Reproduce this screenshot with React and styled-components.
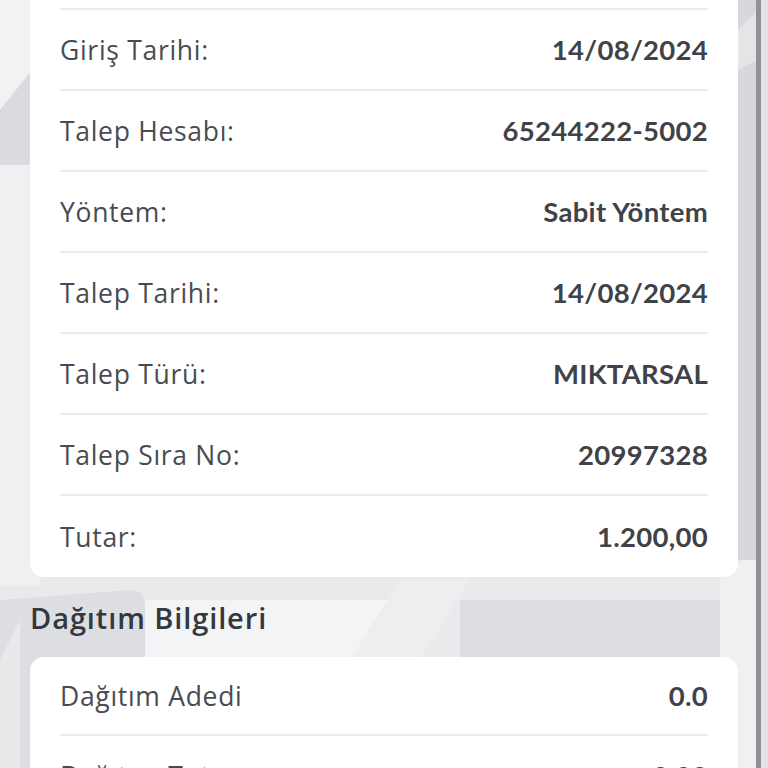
import React from "react";
import styled, { createGlobalStyle } from "styled-components";

const Global = createGlobalStyle`
  html, body { margin: 0; padding: 0; background: #e6e7e9; overflow: hidden; }
  body { font-family: "Open Sans", "Noto Sans", sans-serif; -webkit-font-smoothing: antialiased; }
`;

const Screen = styled.div`
  position: relative;
  width: 768px;
  height: 768px;
  overflow: hidden;
  background: #e8e9eb;
`;

const Backdrop = styled.svg`
  position: absolute;
  inset: 0;
  width: 768px;
  height: 768px;
  z-index: 0;
`;

const Content = styled.div`
  position: relative;
  z-index: 1;
  display: flex;
  flex-direction: column;
  padding: 0 30px;
  margin-top: -71px;
`;

const Card = styled.section`
  background: #ffffff;
  border-radius: 14px;
  padding: 0 30px;
  display: flex;
  flex-direction: column;
`;

const Row = styled.div`
  display: flex;
  align-items: center;
  justify-content: space-between;
  height: ${(p) => p.$h || 80}px;
  border-bottom: ${(p) => (p.$last ? "none" : "2px solid #ebebec")};
  box-sizing: border-box;
`;

const Label = styled.span`
  font-family: "Open Sans", "Noto Sans", sans-serif;
  font-size: 26.5px;
  font-weight: 400;
  color: #484c51;
  letter-spacing: 0.7px;
`;

const Value = styled.span`
  font-family: "Lato", "Noto Sans", sans-serif;
  font-size: 27.5px;
  font-weight: 700;
  color: #3f4348;
  letter-spacing: 0.3px;
`;

const Heading = styled.h2`
  margin: 0;
  height: 80px;
  display: flex;
  align-items: center;
  font-family: "Open Sans", "Noto Sans", sans-serif;
  font-size: 29px;
  font-weight: 600;
  color: #34383d;
  letter-spacing: 0.9px;
`;

const first = [
  ["Talep Durumu:", "Onaylandı"],
  ["Giriş Tarihi:", "14/08/2024"],
  ["Talep Hesabı:", "65244222-5002"],
  ["Yöntem:", "Sabit Yöntem"],
  ["Talep Tarihi:", "14/08/2024"],
  ["Talep Türü:", "MIKTARSAL"],
  ["Talep Sıra No:", "20997328"],
  ["Tutar:", "1.200,00"],
];

const second = [
  ["Dağıtım Adedi", "0.0"],
  ["Dağıtım Tutarı", "0.00"],
];

export default function App() {
  return (
    <>
      <Global />
      <Screen>
        <Backdrop viewBox="0 0 768 768" aria-hidden="true">
          <rect x="0" y="0" width="768" height="768" fill="#e9eaec" />
          <polygon points="0,0 40,0 40,60 0,110" fill="#f1f2f3" />
          <polygon points="0,110 40,60 40,165 0,165" fill="#d9dbde" />
          <rect x="0" y="165" width="40" height="420" fill="#eef0f1" />
          <path d="M0,600 L130,590 Q145,590 145,605 L145,768 L0,768 Z" fill="#dcdee1" />
          <polygon points="0,660 20,620 20,768 0,768" fill="#e8e9eb" />
          <polygon points="145,600 420,600 350,660 145,660" fill="#f3f4f5" />
          <polygon points="400,580 470,580 420,660 350,660" fill="#eceef0" />
          <rect x="460" y="600" width="260" height="60" fill="#dcdee1" />
          <polygon points="720,580 768,540 768,768 720,768" fill="#eff0f2" />
          <rect x="738" y="0" width="20" height="560" fill="#d6d8db" />
          <polygon points="738,30 758,10 758,60 738,70" fill="#e4e5e7" />
          <rect x="756" y="0" width="5" height="768" fill="#8f9194" />
          <rect x="761" y="0" width="7" height="768" fill="#e2e3e5" />
        </Backdrop>
        <Content>
          <Card>
            {first.map(([l, v], i) => (
              <Row key={l} $h={81} $last={i === first.length - 1}>
                <Label>{l}</Label>
                <Value>{v}</Value>
              </Row>
            ))}
          </Card>
          <Heading>Dağıtım Bilgileri</Heading>
          <Card>
            {second.map(([l, v], i) => (
              <Row key={l} $h={79} $last={i === second.length - 1}>
                <Label>{l}</Label>
                <Value>{v}</Value>
              </Row>
            ))}
          </Card>
        </Content>
      </Screen>
    </>
  );
}
